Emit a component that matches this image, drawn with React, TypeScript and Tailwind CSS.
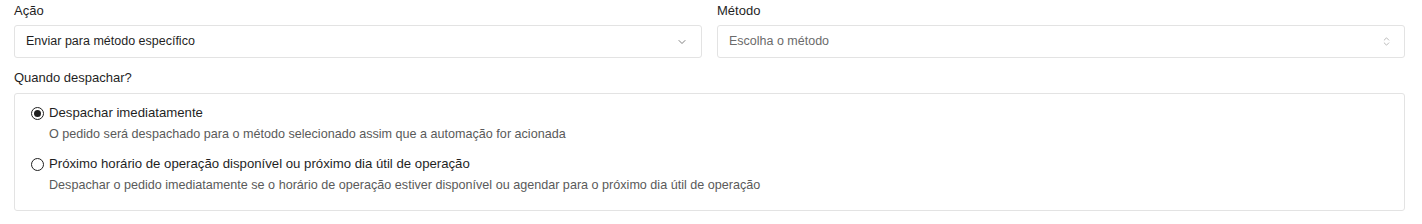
import { ChevronDown, ChevronsUpDown } from "lucide-react";

const OPTIONS = [
  {
    title: "Despachar imediatamente",
    hint: "O pedido será despachado para o método selecionado assim que a automação for acionada",
    checked: true,
  },
  {
    title: "Próximo horário de operação disponível ou próximo dia útil de operação",
    hint: "Despachar o pedido imediatamente se o horário de operação estiver disponível ou agendar para o próximo dia útil de operação",
    checked: false,
  },
];

function Radio({ checked }: { checked: boolean }) {
  return (
    <span className="flex h-[13px] w-[13px] shrink-0 items-center justify-center rounded-full border border-[#1f1f1f]">
      {checked && <span className="h-[7px] w-[7px] rounded-full bg-[#1f1f1f]" />}
    </span>
  );
}

export default function App() {
  return (
    <div className="bg-white pl-[14px] pr-[17px] pt-[3px] font-['Liberation_Sans',Arial,sans-serif] text-[#1f1f1f]">
      <div className="grid grid-cols-2 gap-[15px]">
        <div>
          <div className="mb-[6px] text-[13px] leading-[16px]">Ação</div>
          <div className="flex h-[33px] items-center justify-between rounded-[3px] border border-[#e3e3e3] pl-[11px] pr-[13px] text-[12.5px]">
            <span>Enviar para método específico</span>
            <ChevronDown className="h-[12px] w-[12px] text-[#555]" strokeWidth={1.5} />
          </div>
        </div>
        <div>
          <div className="mb-[6px] text-[13px] leading-[16px]">Método</div>
          <div className="flex h-[33px] items-center justify-between rounded-[3px] border border-[#e3e3e3] pl-[11px] pr-[12px] text-[12.5px]">
            <span className="text-[#6b6b6b]">Escolha o método</span>
            <ChevronsUpDown className="h-[11px] w-[11px] text-[#9a9a9a]" strokeWidth={1.5} />
          </div>
        </div>
      </div>

      <div className="mb-[7px] mt-[12px] text-[13px] leading-[16px]">Quando despachar?</div>
      <div className="flex flex-col gap-[12px] rounded-[3px] border border-[#e3e3e3] px-[16px] pb-[16px] pt-[10px]">
        {OPTIONS.map((o) => (
          <label key={o.title} className="block">
            <div className="flex items-center gap-[5px] text-[13.2px] leading-[18px]">
              <Radio checked={o.checked} />
              <span>{o.title}</span>
            </div>
            <div className="mt-[3px] pl-[18px] text-[12.6px] leading-[18px] text-[#5a5a5a]">{o.hint}</div>
          </label>
        ))}
      </div>
    </div>
  );
}
